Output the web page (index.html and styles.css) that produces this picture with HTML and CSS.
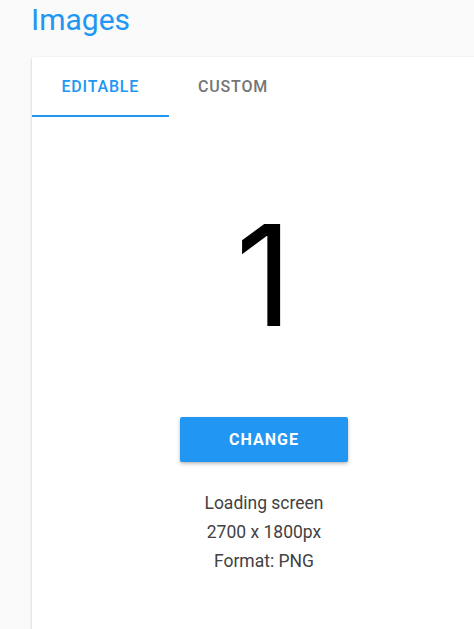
FILE: index.html
```html
<!DOCTYPE html>
<html lang="en">
<head>
  <meta charset="UTF-8" />
  <meta name="viewport" content="width=device-width, initial-scale=1.0"/>
  <title>Images</title>
  <link rel="stylesheet" href="styles.css">
</head>
<body>
  <!-- Page title -->
  <h1 class="page-title">Images</h1>

  <!-- Image card -->
  <div class="card">
    <div class="tabs">
      <div class="tab active">Editable</div>
      <div class="tab">Custom</div>
    </div>

    <div class="preview">
      <div class="preview-number">1</div>
      <button class="change-btn">Change</button>
      <div class="meta">
        <div>Loading screen</div>
        <div>2700 x 1800px</div>
        <div>Format: PNG</div>
      </div>
    </div>
  </div>
</body>
</html>
```

FILE: styles.css
```css
html, body {
  overflow: hidden;
}

body {
  font-family: Roboto, 'Noto Sans', sans-serif;
  margin: 0;
  padding: 2px 0 0 32px;
  background: #fafafa;
  color: #424242;
  height: 627px;
}

/* Title */
.page-title {
  margin: 0 0 0 -1px;
  font-size: 30px;
  font-weight: 400;
  line-height: 35px;
  color: #2196f3;
}

/* Card */
.card {
  margin-top: 20px;
  width: 464px;
  height: 600px;
  background: #fff;
  border-radius: 2px;
  box-shadow: 0 1px 3px rgba(0, 0, 0, 0.12), 0 1px 2px rgba(0, 0, 0, 0.16);
}

/* Tabs */
.tabs {
  display: flex;
}

.tab {
  height: 58px;
  padding: 0 29.5px;
  display: flex;
  align-items: center;
  justify-content: center;
  border-bottom: 2px solid transparent;
  font-size: 16px;
  font-weight: 500;
  letter-spacing: 0.8px;
  text-transform: uppercase;
  color: #757575;
}

.tab.active {
  color: #2196f3;
  border-bottom-color: #2196f3;
}

/* Preview */
.preview {
  display: flex;
  flex-direction: column;
  align-items: center;
  padding-top: 86px;
}

.preview-number {
  font-family: Inter, Roboto, sans-serif;
  font-size: 140px;
  line-height: 144px;
  color: #000;
}

.change-btn {
  margin-top: 70px;
  width: 168px;
  height: 45px;
  border: none;
  border-radius: 2px;
  background: #2196f3;
  color: #fff;
  font-family: Roboto, sans-serif;
  font-size: 16px;
  font-weight: 700;
  letter-spacing: 1px;
  text-transform: uppercase;
  box-shadow: 0 2px 4px rgba(0, 0, 0, 0.2), 0 1px 2px rgba(0, 0, 0, 0.12);
  cursor: pointer;
}

.meta {
  margin-top: 27px;
  text-align: center;
  font-size: 17.5px;
  line-height: 29px;
}
```
